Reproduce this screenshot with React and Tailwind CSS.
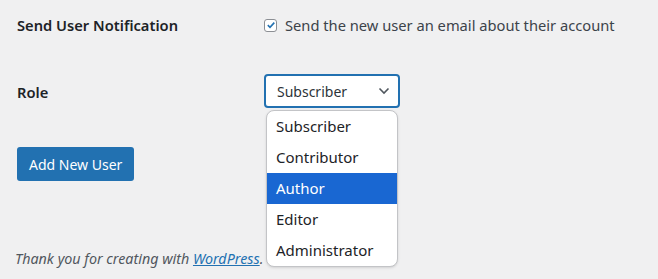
import React from "react";

const roles = ["Subscriber", "Contributor", "Author", "Editor", "Administrator"];

export default function App() {
  return (
    <div
      className="w-[658px] h-[279px] bg-[#f0f0f1] text-[#3c434a] text-[14.7px] overflow-hidden"
      style={{ fontFamily: '"Noto Sans", "Open Sans", sans-serif' }}
    >
      <div className="pl-[17px] pt-[13px]">
        {/* Send notification */}
        <div className="flex items-center h-[24px]">
          <div className="w-[247px] font-semibold text-[#1d2327]">Send User Notification</div>
          <label className="flex items-center gap-[8px] pt-[1px]">
            <span className="w-[13px] h-[13px] rounded-[3px] border border-[#8c8f94] bg-white flex items-center justify-center">
              <svg width="10" height="10" viewBox="0 0 10 10">
                <path d="M1.8 5.2 L4 7.3 L8.3 2.6" fill="none" stroke="#2271b1" strokeWidth="1.6" />
              </svg>
            </span>
            <span>Send the new user an email about their account</span>
          </label>
        </div>

        {/* Role */}
        <div className="flex items-center mt-[37px] h-[34px]">
          <div className="w-[247px] pt-[3px] font-semibold text-[#1d2327]">Role</div>
          <div className="relative">
            <div className="w-[136px] h-[34px] border-2 border-[#2271b1] rounded-[4px] bg-white flex items-center justify-between pl-[11px] pr-[8px] text-[14px] text-[#2c3338]">
              <span>Subscriber</span>
              <svg width="12" height="8" viewBox="0 0 12 8">
                <path d="M1.5 1.5 L6 6 L10.5 1.5" fill="none" stroke="#50575e" strokeWidth="1.6" />
              </svg>
            </div>
            <ul className="absolute left-[2px] top-[36px] w-[132px] bg-white border border-[#c3c4c7] rounded-[8px] overflow-hidden shadow-sm z-10 text-[#1d2327] text-[15px]">
              {roles.map((r) => (
                <li
                  key={r}
                  className={
                    "h-[31px] flex items-center pl-[9px] " +
                    (r === "Author" ? "bg-[#1967d2] text-white" : "")
                  }
                >
                  {r}
                </li>
              ))}
            </ul>
          </div>
        </div>

        <button className="mt-[39px] h-[34px] px-[12px] bg-[#2271b1] text-white text-[14px] rounded-[3px]">
          Add New User
        </button>
      </div>

      <p className="pl-[15px] mt-[67px] italic text-[14.3px] text-[#50575e]">
        Thank you for creating with{" "}
        <a className="text-[#2271b1] underline">WordPress</a>.
      </p>
    </div>
  );
}
